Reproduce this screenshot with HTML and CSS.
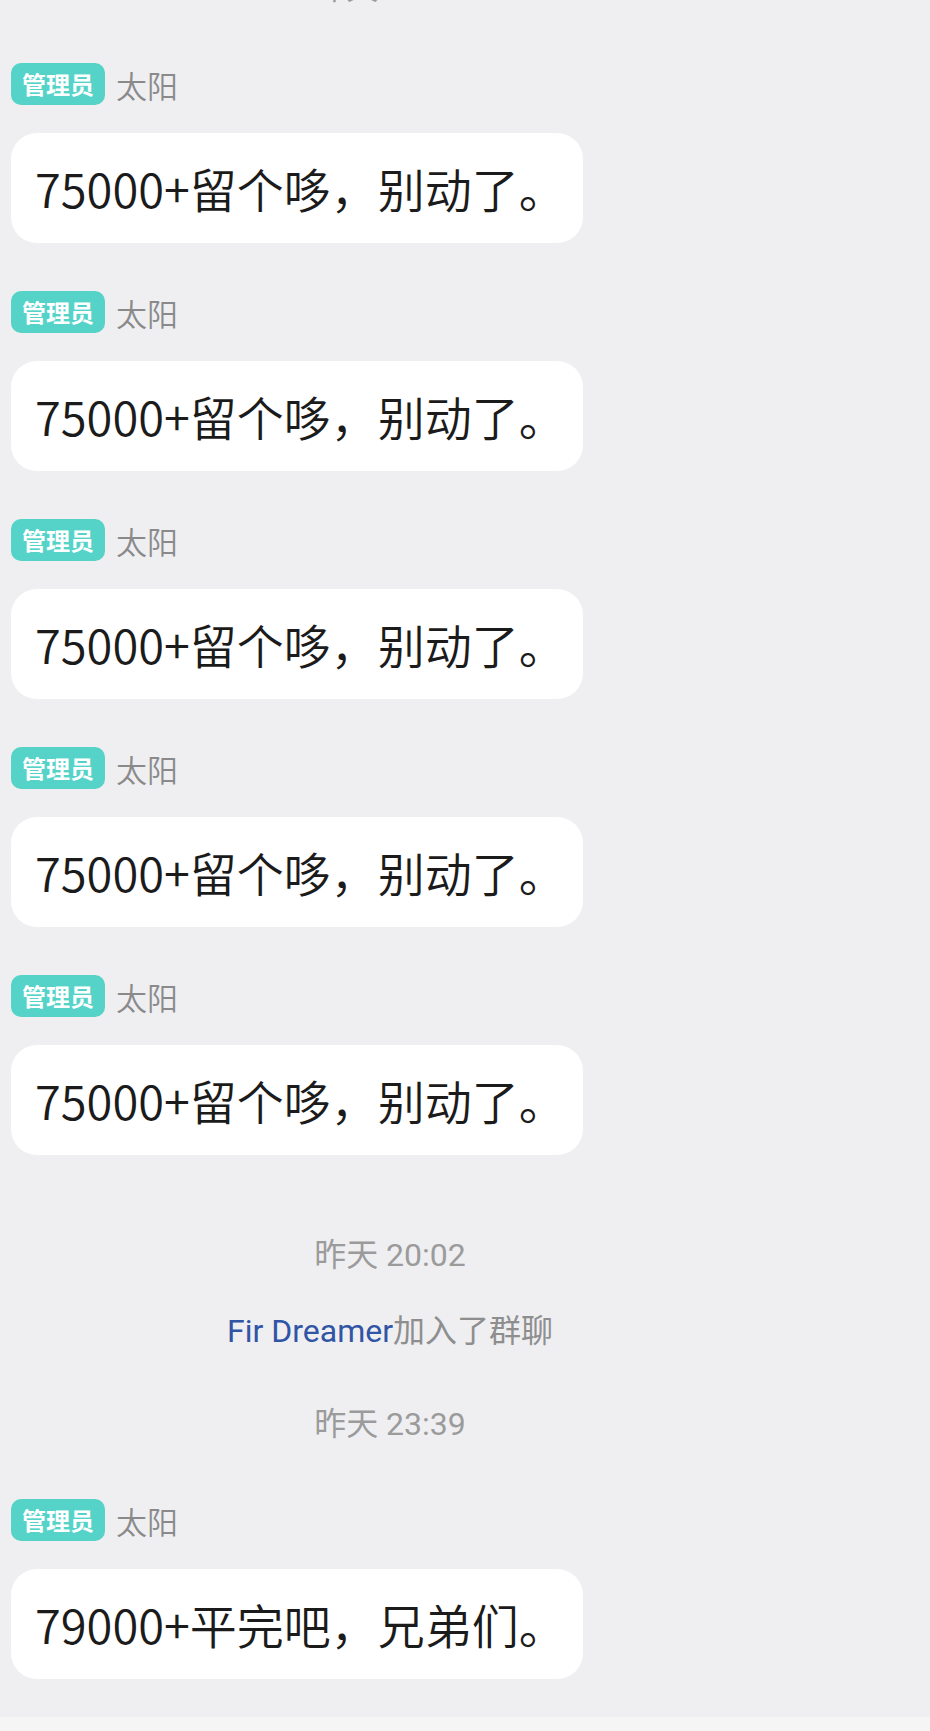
FILE: index.html
```html
<!DOCTYPE html>
<html lang="zh-CN">
<head>
<meta charset="utf-8">
<link rel="stylesheet" href="styles.css">
</head>
<body>
<div class="chat">
  <div class="time time-first">昨天 17:02</div>

  <div class="msg">
    <div class="head"><span class="badge">管理员</span><span class="name">太阳</span></div>
    <div class="bubble">75000+留个哆，别动了。</div>
  </div>
  <div class="msg">
    <div class="head"><span class="badge">管理员</span><span class="name">太阳</span></div>
    <div class="bubble">75000+留个哆，别动了。</div>
  </div>
  <div class="msg">
    <div class="head"><span class="badge">管理员</span><span class="name">太阳</span></div>
    <div class="bubble">75000+留个哆，别动了。</div>
  </div>
  <div class="msg">
    <div class="head"><span class="badge">管理员</span><span class="name">太阳</span></div>
    <div class="bubble">75000+留个哆，别动了。</div>
  </div>
  <div class="msg">
    <div class="head"><span class="badge">管理员</span><span class="name">太阳</span></div>
    <div class="bubble">75000+留个哆，别动了。</div>
  </div>

  <div class="time time-after-msg">昨天 20:02</div>
  <div class="system"><span class="user">Fir Dreamer</span>加入了群聊</div>
  <div class="time time-after-sys">昨天 23:39</div>

  <div class="msg">
    <div class="head"><span class="badge">管理员</span><span class="name">太阳</span></div>
    <div class="bubble">79000+平完吧，兄弟们。</div>
  </div>
</div>
<div class="footer"></div>
</body>
</html>
```
FILE: styles.css
```css
html, body {
  margin: 0;
  padding: 0;
  background: #efeff2;
}
body {
  width: 930px;
  height: 1731px;
  overflow: hidden;
  display: flex;
  flex-direction: column;
  font-family: "Noto Sans CJK SC", "Noto Sans", Roboto, sans-serif;
}
.chat {
  display: flex;
  flex-direction: column;
  padding: 0 11px;
  margin-top: -36px;
  flex: 1;
}
.time {
  height: 48px;
  line-height: 48px;
  font-size: 32px;
  color: #9b9b9b;
  text-align: center;
  padding-right: 150px;
  font-family: Roboto, "Noto Sans CJK SC", sans-serif;
}
.time-after-msg { margin-top: 76px; }
.time-after-sys { margin-top: 45px; }
.system {
  margin-top: 28px;
  height: 48px;
  line-height: 48px;
  font-size: 32px;
  color: #8e8e8e;
  text-align: center;
  padding-right: 150px;
  font-family: Roboto, "Noto Sans CJK SC", sans-serif;
}
.system .user { color: #2f55a4; }
.msg {
  display: flex;
  flex-direction: column;
  align-items: flex-start;
  margin-top: 48px;
}
.time + .msg { margin-top: 51px; }
.head {
  display: flex;
  align-items: center;
  gap: 11px;
  height: 42px;
}
.badge {
  background: #55d3c8;
  color: #ffffff;
  font-weight: 700;
  font-size: 24px;
  height: 42px;
  line-height: 42px;
  padding: 0 11px;
  border-radius: 10px;
}
.name {
  font-size: 31px;
  font-weight: 350;
  color: #8a8a8a;
}
.bubble {
  margin-top: 28px;
  background: #ffffff;
  border-radius: 26px;
  height: 110px;
  line-height: 110px;
  padding: 0 24px 0 24px;
  width: 524px;
  font-size: 47px;
  font-weight: 350;
  color: #1b1b1b;
  white-space: nowrap;
}
.footer {
  height: 14px;
  background: #f5f5f5;
}
```
